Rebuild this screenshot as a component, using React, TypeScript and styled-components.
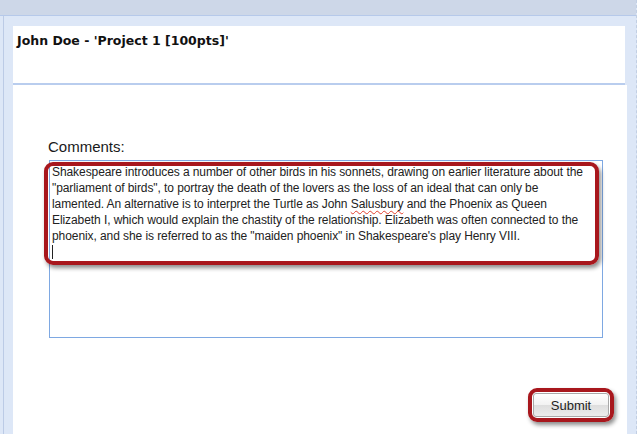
import React from "react";
import styled, { createGlobalStyle } from "styled-components";

const GlobalStyle = createGlobalStyle`
  html, body {
    margin: 0;
    padding: 0;
    background: #ffffff;
    overflow: hidden;
  }
`;

const Page = styled.div`
  width: 636px;
  height: 434px;
  background: #dde7f7;
  border-right: 1px dashed #c2cfe3;
  display: flex;
  flex-direction: column;
`;

const TopBar = styled.div`
  height: 15px;
  background: #cdd7e8;
  border-bottom: 1px solid #b6c9ea;
  flex: none;
`;

const Frame = styled.div`
  flex: 1;
  margin-left: 3px;
  border-left: 1px solid #bccbe6;
  padding: 10px 9px 0 9px;
  display: flex;
  flex-direction: column;
  min-height: 0;
`;

const Header = styled.div`
  height: 59px;
  margin-right: 2px;
  background: #ffffff;
  border-bottom: 2px solid #b9cdee;
  padding: 7px 0 0 4px;
  box-sizing: border-box;
  flex: none;
`;

const Title = styled.h1`
  margin: 0;
  font-family: "DejaVu Sans", Verdana, sans-serif;
  font-weight: bold;
  font-size: 12.5px;
  line-height: 16px;
  color: #111111;
`;

const Panel = styled.div`
  flex: 1;
  background: #ffffff;
  padding: 52px 18px 0 35px;
  display: flex;
  flex-direction: column;
`;

const Label = styled.label`
  font-family: "Liberation Sans", Arial, sans-serif;
  font-size: 15px;
  line-height: 20px;
  color: #1a1a1a;
  margin-bottom: 3px;
`;

const FieldWrap = styled.div`
  position: relative;
  margin-left: 1px;
  width: 554px;
`;

const TextBox = styled.div`
  box-sizing: border-box;
  width: 554px;
  height: 178px;
  border: 1px solid #7ea8e2;
  padding: 3px 2px;
  font-family: "Liberation Sans", Tahoma, Arial, sans-serif;
  font-size: 12px;
  letter-spacing: -0.08px;
  line-height: 16px;
  color: #222222;
  white-space: nowrap;
`;

const Line = styled.div`
  height: 16px;
`;

const Misspelled = styled.span`
  text-decoration: underline wavy #e0402e;
  text-decoration-thickness: 1px;
  text-underline-offset: 2px;
`;

const Caret = styled.span`
  display: inline-block;
  width: 1px;
  height: 14px;
  margin-top: 1px;
  background: #222222;
`;

const Highlight = styled.div<{ $top: number; $left: number; $width: number; $height: number }>`
  position: absolute;
  top: ${(p) => p.$top}px;
  left: ${(p) => p.$left}px;
  width: ${(p) => p.$width}px;
  height: ${(p) => p.$height}px;
  box-sizing: border-box;
  border: 4px solid #a8171d;
  border-radius: 9px;
  box-shadow: 2px 3px 4px rgba(0, 0, 0, 0.45);
  pointer-events: none;
`;

const SubmitRow = styled.div`
  display: flex;
  justify-content: flex-end;
  margin-top: 55px;
`;

const ButtonWrap = styled.div`
  position: relative;
`;

const Button = styled.button`
  width: 76px;
  height: 24px;
  padding: 0;
  margin: 0;
  border: 1px solid #a9a9a9;
  border-radius: 3px;
  background: linear-gradient(#ffffff 0%, #f2f2f2 50%, #dedede 51%, #ececec 100%);
  font-family: "Liberation Sans", Arial, sans-serif;
  font-size: 13px;
  color: #1e1e1e;
`;

export default function App() {
  return (
    <>
      <GlobalStyle />
      <Page>
        <TopBar />
        <Frame>
          <Header>
            <Title>John Doe - 'Project 1 [100pts]'</Title>
          </Header>
          <Panel>
            <Label>Comments:</Label>
            <FieldWrap>
              <TextBox>
                <Line>
                  Shakespeare introduces a number of other birds in his sonnets, drawing on earlier literature about the
                </Line>
                <Line>
                  "parliament of birds", to portray the death of the lovers as the loss of an ideal that can only be
                </Line>
                <Line>
                  lamented. An alternative is to interpret the Turtle as John <Misspelled>Salusbury</Misspelled> and the
                  Phoenix as Queen
                </Line>
                <Line>
                  Elizabeth I, which would explain the chastity of the relationship. Elizabeth was often connected to the
                </Line>
                <Line>phoenix, and she is referred to as the "maiden phoenix" in Shakespeare's play Henry VIII.</Line>
                <Line>
                  <Caret />
                </Line>
              </TextBox>
              <Highlight $top={2} $left={-5} $width={555} $height={103} />
            </FieldWrap>
            <SubmitRow>
              <ButtonWrap>
                <Button>Submit</Button>
                <Highlight $top={-5} $left={-5} $width={86} $height={34} />
              </ButtonWrap>
            </SubmitRow>
          </Panel>
        </Frame>
      </Page>
    </>
  );
}
